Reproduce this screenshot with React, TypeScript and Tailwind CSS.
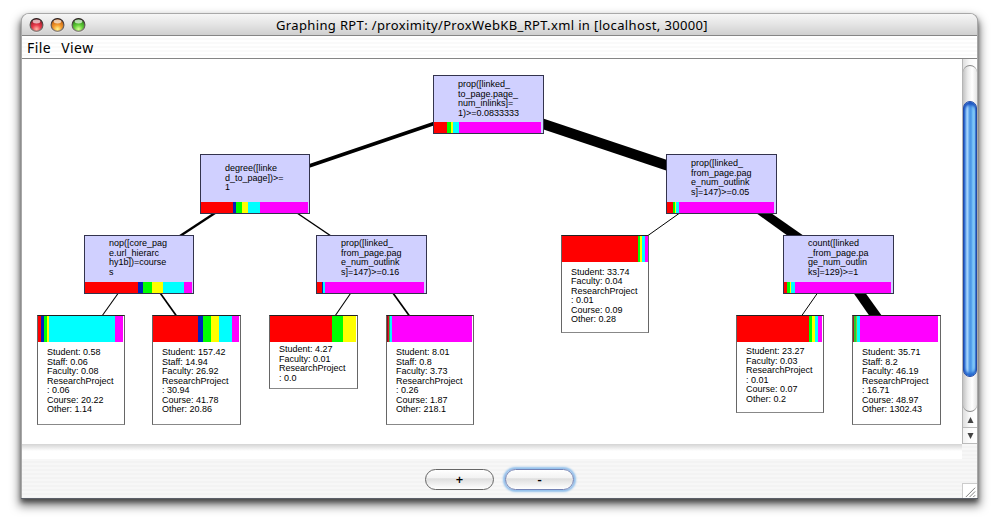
type Segment = [color: string, end: number];

interface TreeNode {
  x: number;
  y: number;
  w: number;
  h: number;
  top: number;
  segments: Segment[];
  lines: string[];
}

const R = '#ff0000';
const B = '#0022bb';
const G = '#00ff00';
const Y = '#ffff00';
const C = '#00ffff';
const M = '#ff00ff';

const splits: TreeNode[] = [
  { x: 433, y: 75, w: 111, h: 59, top: 5, segments: [[R, 14], [G, 18], [Y, 20], [C, 26], [M, 108]], lines: ['prop([linked_', 'to_page.page_', 'num_inlinks]=', '1)>=0.0833333'] },
  { x: 200, y: 154, w: 110, h: 60, top: 10, segments: [[R, 33], [B, 36], [G, 42], [Y, 48], [C, 60], [M, 108]], lines: ['degree([linke', 'd_to_page])>=', '1'] },
  { x: 666, y: 154, w: 111, h: 60, top: 5, segments: [[R, 7], [G, 9], [Y, 10], [C, 13], [M, 108]], lines: ['prop([linked_', 'from_page.pag', 'e_num_outlink', 's]=147)>=0.05'] },
  { x: 84, y: 235, w: 110, h: 59, top: 4, segments: [[R, 54], [B, 59], [G, 68], [Y, 79], [C, 100], [M, 108]], lines: ['nop([core_pag', 'e.url_hierarc', 'hy1b])=course', 's'] },
  { x: 316, y: 235, w: 111, h: 59, top: 4, segments: [[R, 6], [B, 7], [C, 9], [M, 108]], lines: ['prop([linked_', 'from_page.pag', 'e_num_outlink', 's]=147)>=0.16'] },
  { x: 783, y: 235, w: 111, h: 59, top: 4, segments: [[R, 4], [G, 7], [Y, 8], [C, 12], [M, 108]], lines: ['count([linked', '_from_page.pa', 'ge_num_outlin', 'ks]=129)>=1'] },
];

const leaves: TreeNode[] = [
  { x: 37, y: 315, w: 88, h: 110, top: 5, segments: [[R, 4], [B, 7], [G, 10], [Y, 12], [C, 78], [M, 86]], lines: ['Student: 0.58', 'Staff: 0.06', 'Faculty: 0.08', 'ResearchProject', ': 0.06', 'Course: 20.22', 'Other: 1.14'] },
  { x: 152, y: 315, w: 89, h: 110, top: 5, segments: [[R, 46], [B, 51], [G, 59], [Y, 67], [C, 80], [M, 87]], lines: ['Student: 157.42', 'Staff: 14.94', 'Faculty: 26.92', 'ResearchProject', ': 30.94', 'Course: 41.78', 'Other: 20.86'] },
  { x: 269, y: 315, w: 89, h: 74, top: 2, segments: [[R, 63], [G, 74], [Y, 87]], lines: ['Student: 4.27', 'Faculty: 0.01', 'ResearchProject', ': 0.0'] },
  { x: 386, y: 315, w: 88, h: 110, top: 5, segments: [['#8b1111', 2], ['#e01030', 3], ['#20c060', 4], [C, 6], [M, 86]], lines: ['Student: 8.01', 'Staff: 0.8', 'Faculty: 3.73', 'ResearchProject', ': 0.26', 'Course: 1.87', 'Other: 218.1'] },
  { x: 561, y: 235, w: 88, h: 98, top: 4.5, segments: [[R, 77], [G, 79], [Y, 81], [C, 84], [M, 87]], lines: ['Student: 33.74', 'Faculty: 0.04', 'ResearchProject', ': 0.01', 'Course: 0.09', 'Other: 0.28'] },
  { x: 736, y: 315, w: 88, h: 98, top: 4, segments: [[R, 73], [G, 76], [Y, 79], [C, 82], [M, 86]], lines: ['Student: 23.27', 'Faculty: 0.03', 'ResearchProject', ': 0.01', 'Course: 0.07', 'Other: 0.2'] },
  { x: 852, y: 315, w: 89, h: 110, top: 5, segments: [['#9b2020', 2], ['#20d030', 4], ['#90c040', 5], [C, 8], [M, 86]], lines: ['Student: 35.71', 'Staff: 8.2', 'Faculty: 46.19', 'ResearchProject', ': 16.71', 'Course: 48.97', 'Other: 1302.43'] },
];

const STRIPES = 'bg-[repeating-linear-gradient(180deg,#f7f7f7_0px,#f7f7f7_2px,#f3f3f3_2px,#f3f3f3_4px)]';

function Bar({ segments, className }: { segments: Segment[]; className: string }) {
  return (
    <div className={`flex shrink-0 ${className}`}>
      {segments.map(([color, end], i) => (
        <div key={i} className="shrink-0" style={{ background: color, width: end - (i ? segments[i - 1][1] : 1) }} />
      ))}
    </div>
  );
}

function Lines({ lines }: { lines: string[] }) {
  return (
    <>
      {lines.map((line, i) => (
        <div key={i}>{line}</div>
      ))}
    </>
  );
}

function SplitBox({ node }: { node: TreeNode }) {
  return (
    <div
      className="absolute flex flex-col border border-[#33334d] bg-[#d0d0ff]"
      style={{ left: node.x - 22, top: node.y - 59, width: node.w, height: node.h }}
    >
      <div className="min-h-0 grow pl-[24px]" style={{ paddingTop: node.top - 1 }}>
        <Lines lines={node.lines} />
      </div>
      <Bar segments={node.segments} className="h-[11px]" />
    </div>
  );
}

function LeafBox({ node }: { node: TreeNode }) {
  return (
    <div
      className="absolute flex flex-col border border-[#666] border-t-[#222] border-b-[#888] bg-white"
      style={{ left: node.x - 22, top: node.y - 59, width: node.w, height: node.h }}
    >
      <Bar segments={node.segments} className="h-[26px]" />
      <div className="pl-[9px]" style={{ paddingTop: node.top + 1 }}>
        <Lines lines={node.lines} />
      </div>
    </div>
  );
}

function Edges() {
  return (
    <svg className="absolute inset-0" width="940" height="385" viewBox="22 59 940 385" stroke="#000">
      <line x1="434" y1="123.5" x2="309" y2="166" strokeWidth="3.6" />
      <line x1="540" y1="122.8" x2="670" y2="166.3" strokeWidth="10.2" />
      <line x1="215" y1="213" x2="180" y2="236" strokeWidth="2.4" />
      <line x1="297" y1="213" x2="331" y2="236" strokeWidth="1.5" />
      <line x1="118" y1="293.5" x2="102" y2="316" strokeWidth="1.1" />
      <line x1="160.5" y1="293.5" x2="176.5" y2="316" strokeWidth="1.7" />
      <line x1="350.5" y1="293.5" x2="335" y2="316" strokeWidth="1.1" />
      <line x1="393.3" y1="293.5" x2="409.5" y2="316" strokeWidth="1.7" />
      <line x1="679" y1="213.5" x2="648" y2="235.5" strokeWidth="1" />
      <line x1="817.2" y1="293.5" x2="801.5" y2="316" strokeWidth="1" />
      <polygon points="756,213 771,213 804,236 788,236" stroke="none" />
      <polygon points="853.5,293 865.5,293 882,316 869.5,316" stroke="none" />
    </svg>
  );
}

function TrafficLight({ id, dark, mid, light }: { id: string; dark: string; mid: string; light: string }) {
  return (
    <svg width="15" height="16" viewBox="0 0 15 16">
      <defs>
        <radialGradient id={id} cx="0.5" cy="0.82" r="0.75">
          <stop offset="0" stopColor={light} />
          <stop offset="0.45" stopColor={mid} />
          <stop offset="1" stopColor={dark} />
        </radialGradient>
        <linearGradient id={`${id}-rim`} x1="0" y1="0" x2="0" y2="1">
          <stop offset="0" stopColor="#2a2020" />
          <stop offset="1" stopColor="#8c8580" />
        </linearGradient>
      </defs>
      <circle cx="7.5" cy="8.8" r="7" fill="#fff" opacity="0.55" />
      <circle cx="7.5" cy="8" r="6.4" fill={`url(#${id})`} stroke={`url(#${id}-rim)`} strokeWidth="1.2" />
      <ellipse cx="7.5" cy="4.5" rx="3.8" ry="1.9" fill="#fff" opacity="0.65" />
    </svg>
  );
}

function Scrollbar() {
  return (
    <div className="flex w-[15px] flex-col border-l border-[#b5b5b5] bg-[linear-gradient(90deg,#dedede,#fafafa_50%,#fff)]">
      <div className="flex h-[353px] shrink-0 flex-col pt-[6px]">
        <div className="flex grow flex-col rounded-full border border-x-0 border-t-[#888] border-b-[#888] bg-[linear-gradient(90deg,#c4c4c4,#ececec_35%,#fff_65%,#e4e4e4)] pt-[35px]">
          <div className="h-[276px] rounded-full border border-[#2348a4] bg-[linear-gradient(90deg,#2c6fd0_0%,#8fc4f8_18%,#a8d5fb_32%,#5aa2ec_42%,#4a95e6_58%,#6db9f5_70%,#9ae0fd_88%,#4687d8_100%)] shadow-[inset_0_3px_3px_#1b52c0,inset_0_-3px_3px_#2467cf]" />
        </div>
      </div>
      <div className="flex h-[15px] shrink-0 items-center justify-center">
        <svg width="7" height="6" viewBox="0 0 7 6"><path d="M3.5 0L6.5 6H.5Z" fill="#444" /></svg>
      </div>
      <div className="flex grow items-center justify-center border-y border-[#bbb] bg-white/60">
        <svg width="7" height="6" viewBox="0 0 7 6"><path d="M.5 0H6.5L3.5 6Z" fill="#444" /></svg>
      </div>
    </div>
  );
}

export default function App() {
  return (
    <div className="flex h-[527px] w-[1002px] overflow-hidden bg-white pt-[13px] pl-[21px] text-black">
      <div className="flex h-[485px] w-[957px] flex-col rounded-t-[8px] border-x border-t border-[#a8a8a8] bg-white shadow-[0_1px_0_#5c6069,0_6px_10px_2px_rgba(0,0,0,0.5),0_4px_4px_rgba(0,0,0,0.45)]">
        <div className="flex h-[22px] shrink-0 items-center rounded-t-[7px] border-b border-[#858585] bg-[linear-gradient(180deg,#f6f6f6,#e4e4e4_50%,#cfcfcf)]">
          <div className="flex w-[254px] shrink-0 gap-[6px] pl-[7px]">
            <TrafficLight id="close" dark="#8e1a26" mid="#e8394b" light="#ffb9a8" />
            <TrafficLight id="minimize" dark="#b95a10" mid="#f59a2c" light="#fff68e" />
            <TrafficLight id="zoom" dark="#2c7a1c" mid="#62cf38" light="#d8ff92" />
          </div>
          <div className="font-['Noto_Sans','Open_Sans',sans-serif] text-[13px] leading-[20px] tracking-[0.36px] whitespace-nowrap">
            Graphing RPT: /proximity/ProxWebKB_RPT.xml in [localhost, 30000]
          </div>
        </div>
        <div className="flex h-[23px] shrink-0 items-center gap-[10px] border-b border-[#858585] bg-[repeating-linear-gradient(180deg,#fff_0px,#fff_2px,#fafafa_2px,#fafafa_4px)] pt-px pl-[5px] font-['Noto_Sans','Open_Sans',sans-serif] text-[14px] leading-[22px] tracking-[0.45px]">
          <span>File</span>
          <span>View</span>
        </div>
        <div className="flex h-[385px] shrink-0">
          <div className="relative w-[940px] shrink-0 bg-white font-['Liberation_Sans',Arial,sans-serif] text-[9px] leading-[9.5px] whitespace-nowrap">
            <Edges />
            {splits.map((n) => <SplitBox key={`${n.x}-${n.y}`} node={n} />)}
            {leaves.map((n) => <LeafBox key={`${n.x}-${n.y}`} node={n} />)}
          </div>
          <Scrollbar />
        </div>
        <div className={`flex h-[15px] shrink-0 ${STRIPES}`}>
          <div className="w-[940px] bg-[linear-gradient(180deg,#d4d4d4_0px,#e6e6e6_3px,#fff_7px)]" />
        </div>
        <div className={`flex grow ${STRIPES}`}>
          <div className="flex w-[940px] justify-center gap-[11px] pt-[10px] pl-[15px] font-['Noto_Sans','Open_Sans',sans-serif] text-[13px] leading-[19px] font-semibold">
            <button className="h-[21px] w-[69px] rounded-full border border-[#666] bg-[linear-gradient(180deg,#fff,#f2f2f2_42%,#dedede_46%,#fff)]">+</button>
            <button className="h-[21px] w-[69px] rounded-full border border-[#7382b4] bg-[linear-gradient(180deg,#fff,#f2f2f2_42%,#dedede_46%,#fff)] shadow-[0_0_2px_2px_#91bfeb]">-</button>
          </div>
          <div className="flex w-[15px] items-end">
            <svg className="border-t border-l border-[#ccc] bg-white" width="15" height="15" viewBox="0 0 15 15" stroke="#777">
              <path d="M3 14L13 4M7 14L13 8M11 14L13 12" />
            </svg>
          </div>
        </div>
      </div>
    </div>
  );
}
